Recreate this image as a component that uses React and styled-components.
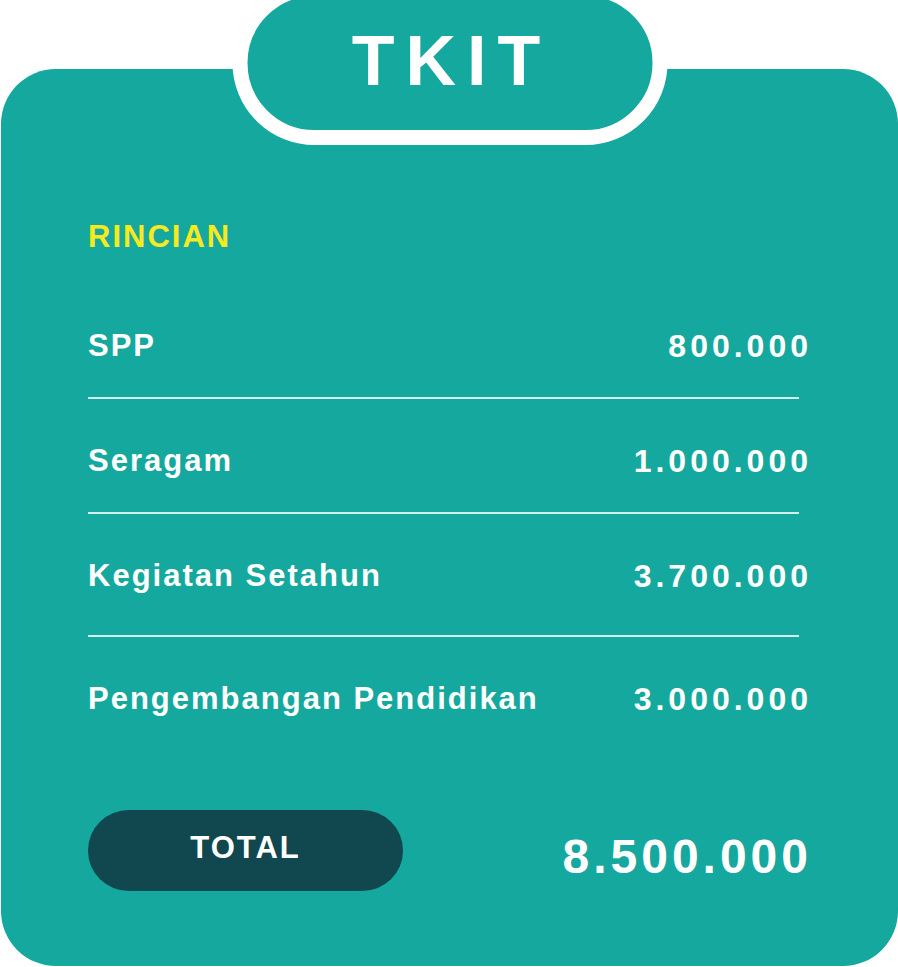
import React from 'react'
import styled, { createGlobalStyle } from 'styled-components'

const GlobalStyle = createGlobalStyle`
  html, body {
    margin: 0;
    padding: 0;
    background: #ffffff;
    overflow: hidden;
  }
  body {
    font-family: "Liberation Sans", Arial, sans-serif;
  }
`

const Page = styled.div`
  width: 898px;
  height: 967px;
  padding-top: 69px;
  padding-left: 1px;
  box-sizing: border-box;
`

const Card = styled.div`
  position: relative;
  width: 897px;
  height: 897px;
  box-sizing: border-box;
  border-radius: 55px;
  background: #15a89e;
  padding: 153px 87px 0 87px;
  display: flex;
  flex-direction: column;
  color: #ffffff;
`

const Badge = styled.div`
  position: absolute;
  top: -88px;
  left: 50%;
  transform: translateX(-50%);
  width: 405px;
  height: 134px;
  border: 15px solid #ffffff;
  border-radius: 82px;
  background: #15a89e;
  display: flex;
  align-items: center;
  justify-content: center;
`

const BadgeText = styled.span`
  font-size: 70px;
  line-height: 70px;
  font-weight: 700;
  letter-spacing: 11px;
  padding-left: 4px;
  padding-bottom: 4px;
  color: #ffffff;
`

const Heading = styled.div`
  font-size: 31px;
  line-height: 30px;
  font-weight: 700;
  letter-spacing: 2px;
  color: #f6ea1f;
`

const Row = styled.div`
  display: flex;
  justify-content: space-between;
  align-items: center;
  height: 30px;
  margin-top: ${p => p.$gap}px;
`

const Label = styled.span`
  font-size: 31px;
  line-height: 30px;
  font-weight: 700;
  letter-spacing: 2px;
`

const Amount = styled.span`
  font-size: 32px;
  line-height: 30px;
  font-weight: 700;
  letter-spacing: 4px;
  margin-right: -1px;
`

const Divider = styled.div`
  height: 2px;
  width: 711px;
  background: #d4eeeb;
  margin-top: ${p => p.$gap}px;
`

const TotalRow = styled.div`
  display: flex;
  justify-content: space-between;
  align-items: center;
  margin-top: 96px;
`

const TotalPill = styled.div`
  width: 315px;
  height: 81px;
  border-radius: 41px / 40px;
  background: #11474e;
  display: flex;
  align-items: center;
  justify-content: center;
`

const TotalLabel = styled.span`
  font-size: 31px;
  line-height: 30px;
  font-weight: 700;
  letter-spacing: 2px;
  margin-bottom: 5px;
`

const TotalAmount = styled.span`
  font-size: 48px;
  line-height: 47px;
  font-weight: 700;
  letter-spacing: 4px;
  margin-right: -1px;
  margin-top: 11px;
`

const items = [
  { label: 'SPP', amount: '800.000', gap: 79, divider: 36 },
  { label: 'Seragam', amount: '1.000.000', gap: 47, divider: 36 },
  { label: 'Kegiatan Setahun', amount: '3.700.000', gap: 47, divider: 44 },
  { label: 'Pengembangan Pendidikan', amount: '3.000.000', gap: 47 },
]

export default function App() {
  return (
    <>
      <GlobalStyle />
      <Page>
        <Card>
          <Badge>
            <BadgeText>TKIT</BadgeText>
          </Badge>
          <Heading>RINCIAN</Heading>
          {items.map(item => (
            <React.Fragment key={item.label}>
              <Row $gap={item.gap}>
                <Label>{item.label}</Label>
                <Amount>{item.amount}</Amount>
              </Row>
              {item.divider && <Divider $gap={item.divider} />}
            </React.Fragment>
          ))}
          <TotalRow>
            <TotalPill>
              <TotalLabel>TOTAL</TotalLabel>
            </TotalPill>
            <TotalAmount>8.500.000</TotalAmount>
          </TotalRow>
        </Card>
      </Page>
    </>
  )
}
